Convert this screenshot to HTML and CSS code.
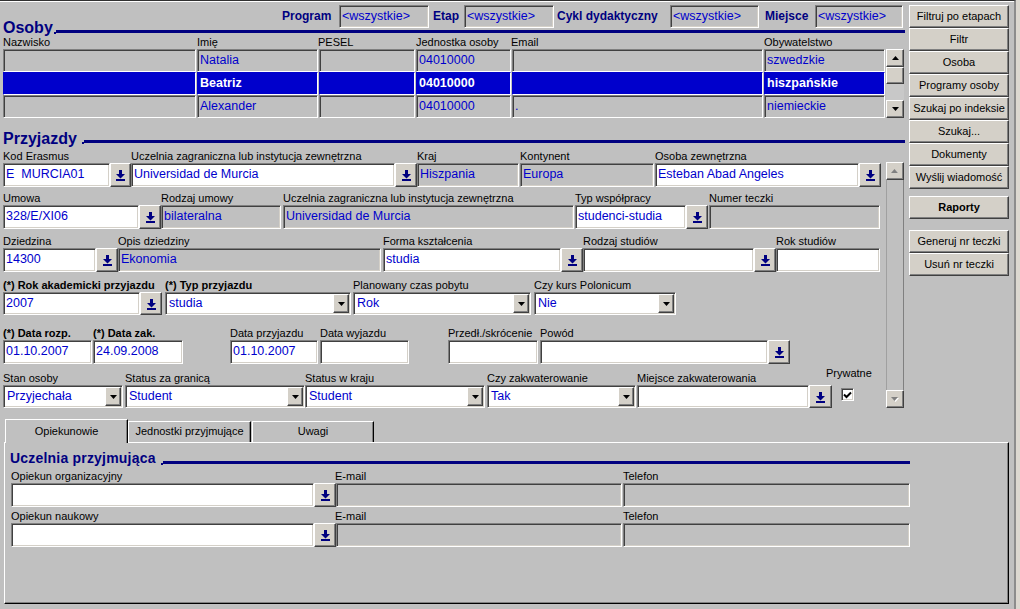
FILE: index.html
```html
<!DOCTYPE html>
<html lang="pl">
<head>
<meta charset="utf-8">
<title>Przyjazdy</title>
<link rel="stylesheet" href="styles.css">
</head>
<body>
<div class="app">
  <div class="top">
    <div class="leftcol">
      <div class="sechead hd-osoby">
        <div class="sectitle">Osoby</div>
        <div class="headright">
          <div class="filters">
            <span class="flbl fl-prog">Program</span><span class="ffld w90">&lt;wszystkie&gt;</span>
            <span class="flbl fl-etap">Etap</span><span class="ffld w90">&lt;wszystkie&gt;</span>
            <span class="flbl fl-cykl">Cykl dydaktyczny</span><span class="ffld w89">&lt;wszystkie&gt;</span>
            <span class="flbl fl-miej">Miejsce</span><span class="ffld w88">&lt;wszystkie&gt;</span>
          </div>
          <div class="hline"></div>
        </div>
      </div>

      <div class="cols thead">
        <span>Nazwisko</span><span>Imię</span><span class="lm1">PESEL</span><span>Jednostka osoby</span><span class="lm1">Email</span><span>Obywatelstwo</span>
      </div>
      <div class="tbl">
        <div class="cols rows">
          <div class="c"></div><div class="c">Natalia</div><div class="c"></div><div class="c">04010000</div><div class="c"></div><div class="c">szwedzkie</div>
          <div class="c sel"></div><div class="c sel">Beatriz</div><div class="c sel"></div><div class="c sel">04010000</div><div class="c sel"></div><div class="c sel">hiszpańskie</div>
          <div class="c"></div><div class="c">Alexander</div><div class="c"></div><div class="c">04010000</div><div class="c">.</div><div class="c">niemieckie</div>
        </div>
        <div class="vsb vsb-small">
          <div class="sbtn"><svg width="7" height="4" viewBox="0 0 7 4"><path d="M3.5 0L7 4H0z" fill="#000"/></svg></div>
          <div class="thumb"></div>
          <div class="track"></div>
          <div class="sbtn"><svg width="7" height="4" viewBox="0 0 7 4"><path d="M0 0h7L3.5 4z" fill="#000"/></svg></div>
        </div>
      </div>

      <div class="sechead hd-przy">
        <div class="sectitle">Przyjazdy</div>
        <div class="hline"></div>
      </div>

      <div class="przy-body">
        <div class="przy-fields">
          <div class="prow">
            <div class="fg g128"><div class="lbl">Kod Erasmus</div><div class="ctl"><div class="f w">E&nbsp;&nbsp;MURCIA01</div><div class="lk lk21"><svg width="9" height="11" viewBox="0 0 9 11"><path d="M3 0h3v4h3L4.5 8.5 0 4h3z" fill="#000080"/><rect x="0" y="9" width="9" height="2" fill="#000080"/></svg></div></div></div>
            <div class="fg g286"><div class="lbl">Uczelnia zagraniczna lub instytucja zewnętrzna</div><div class="ctl"><div class="f w">Universidad de Murcia</div><div class="lk"><svg width="9" height="11" viewBox="0 0 9 11"><path d="M3 0h3v4h3L4.5 8.5 0 4h3z" fill="#000080"/><rect x="0" y="9" width="9" height="2" fill="#000080"/></svg></div></div></div>
            <div class="fg g102"><div class="lbl">Kraj</div><div class="ctl"><div class="f">Hiszpania</div></div></div>
            <div class="fg g134 ml1"><div class="lbl">Kontynent</div><div class="ctl"><div class="f">Europa</div></div></div>
            <div class="fg g226 ml1"><div class="lbl">Osoba zewnętrzna</div><div class="ctl"><div class="f w">Esteban Abad Angeles</div><div class="lk"><svg width="9" height="11" viewBox="0 0 9 11"><path d="M3 0h3v4h3L4.5 8.5 0 4h3z" fill="#000080"/><rect x="0" y="9" width="9" height="2" fill="#000080"/></svg></div></div></div>
          </div>

          <div class="prow r2">
            <div class="fg g158"><div class="lbl">Umowa</div><div class="ctl"><div class="f w">328/E/XI06</div><div class="lk"><svg width="9" height="11" viewBox="0 0 9 11"><path d="M3 0h3v4h3L4.5 8.5 0 4h3z" fill="#000080"/><rect x="0" y="9" width="9" height="2" fill="#000080"/></svg></div></div></div>
            <div class="fg g120"><div class="lbl">Rodzaj umowy</div><div class="ctl"><div class="f">bilateralna</div></div></div>
            <div class="fg g291 ml2"><div class="lbl">Uczelnia zagraniczna lub instytucja zewnętrzna</div><div class="ctl"><div class="f">Universidad de Murcia</div></div></div>
            <div class="fg g133 ml1"><div class="lbl">Typ współpracy</div><div class="ctl"><div class="f w">studenci-studia</div><div class="lk"><svg width="9" height="11" viewBox="0 0 9 11"><path d="M3 0h3v4h3L4.5 8.5 0 4h3z" fill="#000080"/><rect x="0" y="9" width="9" height="2" fill="#000080"/></svg></div></div></div>
            <div class="fg g171 ml1"><div class="lbl">Numer teczki</div><div class="ctl"><div class="f"></div></div></div>
          </div>

          <div class="prow r3">
            <div class="fg g115"><div class="lbl">Dziedzina</div><div class="ctl"><div class="f w">14300</div><div class="lk"><svg width="9" height="11" viewBox="0 0 9 11"><path d="M3 0h3v4h3L4.5 8.5 0 4h3z" fill="#000080"/><rect x="0" y="9" width="9" height="2" fill="#000080"/></svg></div></div></div>
            <div class="fg g263"><div class="lbl">Opis dziedziny</div><div class="ctl"><div class="f">Ekonomia</div></div></div>
            <div class="fg g200 ml2"><div class="lbl">Forma kształcenia</div><div class="ctl"><div class="f w">studia</div><div class="lk"><svg width="9" height="11" viewBox="0 0 9 11"><path d="M3 0h3v4h3L4.5 8.5 0 4h3z" fill="#000080"/><rect x="0" y="9" width="9" height="2" fill="#000080"/></svg></div></div></div>
            <div class="fg g193"><div class="lbl">Rodzaj studiów</div><div class="ctl"><div class="f w"></div><div class="lk"><svg width="9" height="11" viewBox="0 0 9 11"><path d="M3 0h3v4h3L4.5 8.5 0 4h3z" fill="#000080"/><rect x="0" y="9" width="9" height="2" fill="#000080"/></svg></div></div></div>
            <div class="fg g104"><div class="lbl">Rok studiów</div><div class="ctl"><div class="f w"></div></div></div>
          </div>

          <div class="prow r4">
            <div class="fg g159"><div class="lbl b">(*) Rok akademicki przyjazdu</div><div class="ctl"><div class="f w h23">2007</div><div class="lk h23"><svg width="9" height="11" viewBox="0 0 9 11"><path d="M3 0h3v4h3L4.5 8.5 0 4h3z" fill="#000080"/><rect x="0" y="9" width="9" height="2" fill="#000080"/></svg></div></div></div>
            <div class="fg g186 ml3"><div class="lbl b">(*) Typ przyjazdu</div><div class="ctl"><div class="cb"><span class="t">studia</span><span class="dd"><svg width="7" height="4" viewBox="0 0 7 4"><path d="M0 0h7L3.5 4z" fill="#000"/></svg></span></div></div></div>
            <div class="fg g178 ml2"><div class="lbl">Planowany czas pobytu</div><div class="ctl"><div class="cb"><span class="t">Rok</span><span class="dd"><svg width="7" height="4" viewBox="0 0 7 4"><path d="M0 0h7L3.5 4z" fill="#000"/></svg></span></div></div></div>
            <div class="fg g142 ml3"><div class="lbl">Czy kurs Polonicum</div><div class="ctl"><div class="cb"><span class="t">Nie</span><span class="dd"><svg width="7" height="4" viewBox="0 0 7 4"><path d="M0 0h7L3.5 4z" fill="#000"/></svg></span></div></div></div>
          </div>

          <div class="prow r5">
            <div class="fg g89"><div class="lbl b">(*) Data rozp.</div><div class="ctl"><div class="f w">01.10.2007</div></div></div>
            <div class="fg g90 ml1"><div class="lbl b">(*) Data zak.</div><div class="ctl"><div class="f w">24.09.2008</div></div></div>
            <div class="fg g88 ml47"><div class="lbl">Data przyjazdu</div><div class="ctl"><div class="f w">01.10.2007</div></div></div>
            <div class="fg g89 ml2"><div class="lbl">Data wyjazdu</div><div class="ctl"><div class="f w"></div></div></div>
            <div class="fg g90 ml39"><div class="lbl">Przedł./skrócenie</div><div class="ctl"><div class="f w"></div></div></div>
            <div class="fg g250 ml2"><div class="lbl">Powód</div><div class="ctl"><div class="f w"></div><div class="lk"><svg width="9" height="11" viewBox="0 0 9 11"><path d="M3 0h3v4h3L4.5 8.5 0 4h3z" fill="#000080"/><rect x="0" y="9" width="9" height="2" fill="#000080"/></svg></div></div></div>
          </div>

          <div class="prow r6">
            <div class="fg g120"><div class="lbl">Stan osoby</div><div class="ctl"><div class="cb"><span class="t">Przyjechała</span><span class="dd"><svg width="7" height="4" viewBox="0 0 7 4"><path d="M0 0h7L3.5 4z" fill="#000"/></svg></span></div></div></div>
            <div class="fg g180 ml2"><div class="lbl">Status za granicą</div><div class="ctl"><div class="cb"><span class="t">Student</span><span class="dd"><svg width="7" height="4" viewBox="0 0 7 4"><path d="M0 0h7L3.5 4z" fill="#000"/></svg></span></div></div></div>
            <div class="fg g180"><div class="lbl">Status w kraju</div><div class="ctl"><div class="cb"><span class="t">Student</span><span class="dd"><svg width="7" height="4" viewBox="0 0 7 4"><path d="M0 0h7L3.5 4z" fill="#000"/></svg></span></div></div></div>
            <div class="fg g149 ml2"><div class="lbl">Czy zakwaterowanie</div><div class="ctl"><div class="cb"><span class="t">Tak</span><span class="dd"><svg width="7" height="4" viewBox="0 0 7 4"><path d="M0 0h7L3.5 4z" fill="#000"/></svg></span></div></div></div>
            <div class="fg g195 ml1"><div class="lbl">Miejsce zakwaterowania</div><div class="ctl"><div class="f w h23"></div><div class="lk lk23 h23"><svg width="9" height="11" viewBox="0 0 9 11"><path d="M3 0h3v4h3L4.5 8.5 0 4h3z" fill="#000080"/><rect x="0" y="9" width="9" height="2" fill="#000080"/></svg></div></div></div>
            <div class="fg prywatne"><div class="lbl">Prywatne</div><div class="chk"><svg width="9" height="8" viewBox="0 0 9 8"><path d="M1 3.5l2.5 2.5L8 1.5" fill="none" stroke="#000" stroke-width="2"/></svg></div></div>
          </div>
        </div>
        <div class="vsb vsb-big">
          <div class="sbtn dis"><svg width="8" height="5" viewBox="0 0 8 5"><path d="M4 1L7 4H1z" fill="#fff"/><path d="M3.5 0L7 4H0z" fill="#808080"/></svg></div>
          <div class="track"></div>
          <div class="sbtn dis"><svg width="8" height="5" viewBox="0 0 8 5"><path d="M1 1h7L4.5 5z" fill="#fff"/><path d="M0 0h7L3.5 4z" fill="#808080"/></svg></div>
        </div>
      </div>
    </div>

    <div class="btncol">
      <div class="btn">Filtruj po etapach</div>
      <div class="btn">Filtr</div>
      <div class="btn">Osoba</div>
      <div class="btn">Programy osoby</div>
      <div class="btn">Szukaj po indeksie</div>
      <div class="btn">Szukaj...</div>
      <div class="btn">Dokumenty</div>
      <div class="btn">Wyślij wiadomość</div>
      <div class="btn bold gap7">Raporty</div>
      <div class="btn gap11">Generuj nr teczki</div>
      <div class="btn">Usuń nr teczki</div>
    </div>
  </div>

  <div class="tabs">
    <div class="tab active t123">Opiekunowie</div>
    <div class="tab t123">Jednostki przyjmujące</div>
    <div class="tab t122 ml1">Uwagi</div>
  </div>
  <div class="panel">
    <div class="sechead hd-pnl">
      <div class="sectitle small">Uczelnia przyjmująca</div>
      <div class="hline"></div>
    </div>
    <div class="prow pr1">
      <div class="fg g325"><div class="lbl">Opiekun organizacyjny</div><div class="ctl"><div class="f w"></div><div class="lk"><svg width="9" height="11" viewBox="0 0 9 11"><path d="M3 0h3v4h3L4.5 8.5 0 4h3z" fill="#000080"/><rect x="0" y="9" width="9" height="2" fill="#000080"/></svg></div></div></div>
      <div class="fg g286"><div class="lbl lm1">E-mail</div><div class="ctl"><div class="f"></div></div></div>
      <div class="fg g287 ml1"><div class="lbl">Telefon</div><div class="ctl"><div class="f"></div></div></div>
    </div>
    <div class="prow pr2">
      <div class="fg g325"><div class="lbl">Opiekun naukowy</div><div class="ctl"><div class="f w"></div><div class="lk"><svg width="9" height="11" viewBox="0 0 9 11"><path d="M3 0h3v4h3L4.5 8.5 0 4h3z" fill="#000080"/><rect x="0" y="9" width="9" height="2" fill="#000080"/></svg></div></div></div>
      <div class="fg g286"><div class="lbl lm1">E-mail</div><div class="ctl"><div class="f"></div></div></div>
      <div class="fg g287 ml1"><div class="lbl">Telefon</div><div class="ctl"><div class="f"></div></div></div>
    </div>
  </div>
</div>
</body>
</html>
```

FILE: styles.css
```css
* { box-sizing: border-box; margin: 0; padding: 0; }
html, body { width: 1020px; height: 609px; overflow: hidden; }
body {
  background: #dcd8d0;
  font-family: "Liberation Sans", Arial, sans-serif;
  font-size: 11px;
  color: #000;
}
.app {
  width: 1016px;
  height: 609px;
  background: #c0c0c0;
  border-top: 1px solid #303030;
  border-right: 2px solid #8c8c8c;
  box-shadow: inset 0 1px 0 #ffffff;
}
.top { display: flex; height: 418px; }
.leftcol { width: 905px; }

/* section headers */
.sechead { display: flex; align-items: flex-end; }
.sectitle {
  font-weight: bold;
  font-size: 16px;
  line-height: 16px;
  color: #000080;
  padding-left: 3px;
  white-space: nowrap;
}
.sectitle.small { font-size: 14px; line-height: 14px; padding-left: 0; letter-spacing: 0.2px; }
.hline {
  position: relative;
  flex: 1;
  height: 3px;
  background: #000080;
  margin-left: 5px;
}
.hline::before {
  content: "";
  position: absolute;
  left: -2px;
  top: 2px;
  width: 2px;
  height: 2px;
  background: #000080;
}
.hd-osoby { height: 35px; }
.headright { flex: 1; display: flex; flex-direction: column; margin-left: 3px; }
.headright .hline { flex: none; margin-left: 0; margin-top: 2px; margin-bottom: 3px; }
.filters {
  display: flex;
  justify-content: flex-end;
  margin-top: 4px;
  height: 23px;
  padding-right: 2px;
}
.flbl {
  font-weight: bold;
  font-size: 12px;
  line-height: 23px;
  color: #000080;
  white-space: nowrap;
}
.fl-prog { width: 58px; padding-left: 1px; }
.fl-etap { width: 35px; padding-left: 4px; }
.fl-cykl { width: 116px; padding-left: 3px; }
.fl-miej { width: 56px; padding-left: 6px; }
.ffld {
  height: 23px;
  border: 1px solid;
  border-color: #808080 #fff #fff #808080;
  box-shadow: inset 1px 1px 0 #404040, inset -1px -1px 0 #d4d0c8;
  color: #0000cc;
  font-size: 12.5px;
  line-height: 20px;
  padding-left: 2px;
  white-space: nowrap;
  overflow: hidden;
}
.w90 { width: 90px; }
.w89 { width: 89px; }
.w88 { width: 88px; }

/* Osoby table */
.cols {
  display: grid;
  grid-template-columns: 193px 121px 96px 95px 251px 121px;
  column-gap: 1px;
}
.thead { margin-left: 3px; height: 13px; line-height: 13px; white-space: nowrap; }
.lm1 { margin-left: -1px; }
.tbl { display: flex; margin-left: 3px; height: 69px; }
.rows { grid-auto-rows: 23px; }
.c {
  height: 23px;
  border: 1px solid;
  border-color: #808080 #fff #fff #808080;
  box-shadow: inset 1px 1px 0 #404040;
  color: #0000cc;
  font-size: 12.5px;
  line-height: 20px;
  padding-left: 2px;
  white-space: nowrap;
  overflow: hidden;
}
.c.sel {
  background: #0000cc;
  color: #fff;
  font-weight: bold;
  border-color: #0000cc #fff #fff #0000cc;
  box-shadow: none;
}

/* scrollbars */
.vsb { width: 18px; display: flex; flex-direction: column; }
.vsb-small { margin-left: 1px; }
.vsb-small .thumb {
  height: 17px;
  background: #d4d0c8;
  border: 1px solid;
  border-color: #fff #404040 #404040 #fff;
  box-shadow: inset -1px -1px 0 #808080;
}
.vsb-small .track { height: 16px; background: #c8c8c8; }
.sbtn {
  height: 18px;
  background: #d4d0c8;
  border: 1px solid;
  border-color: #fff #404040 #404040 #fff;
  box-shadow: inset -1px -1px 0 #808080;
  display: flex;
  align-items: center;
  justify-content: center;
}
.vsb-big { margin-left: 3px; margin-top: 12px; height: 246px; }
.vsb-big .track {
  flex: 1;
  background: #c0c0c0;
  border-left: 1px solid #a0a0a0;
  border-right: 1px solid #808080;
}

/* Przyjazdy */
.hd-przy { margin-top: 13px; height: 16px; }
.hd-przy .hline { margin-bottom: 4px; margin-left: 7px; }
.przy-body { display: flex; margin-top: 3px; }
.przy-fields { width: 883px; }
.prow { display: flex; align-items: flex-start; padding-left: 3px; }
.r2 { margin-top: 5px; }
.r3 { margin-top: 6px; }
.r4 { margin-top: 7px; }
.r5 { margin-top: 12px; }
.r6 { margin-top: 8px; }
.fg { display: flex; flex-direction: column; }
.lbl { height: 13px; line-height: 13px; white-space: nowrap; }
.lbl.b { font-weight: bold; }
.ctl { display: flex; }
.f {
  flex: 1;
  min-width: 0;
  height: 24px;
  border: 1px solid;
  border-color: #808080 #fff #fff #808080;
  box-shadow: inset 1px 1px 0 #404040, inset -1px -1px 0 #d4d0c8;
  background: #c0c0c0;
  color: #0000cc;
  font-size: 12.5px;
  line-height: 21px;
  padding-left: 2px;
  white-space: nowrap;
  overflow: hidden;
}
.f.w { background: #fff; }
.f.h23 { height: 23px; line-height: 20px; }
.lk {
  width: 22px;
  height: 24px;
  flex: none;
  background: #d4d0c8;
  border: 1px solid;
  border-color: #fff #404040 #404040 #fff;
  box-shadow: inset -1px -1px 0 #808080;
  display: flex;
  align-items: center;
  justify-content: center;
  padding-top: 1px;
}
.lk21 { width: 21px; }
.lk23 { width: 23px; }
.lk.h23 { height: 23px; }
.cb {
  flex: 1;
  display: flex;
  height: 23px;
  padding: 1px;
  background: #fff;
  border: 1px solid;
  border-color: #808080 #fff #fff #808080;
  box-shadow: inset 1px 1px 0 #404040, inset -1px -1px 0 #d4d0c8;
}
.cb .t {
  flex: 1;
  color: #0000cc;
  font-size: 12.5px;
  line-height: 19px;
  padding-left: 2px;
  white-space: nowrap;
  overflow: hidden;
}
.cb .dd {
  width: 16px;
  background: #d4d0c8;
  border: 1px solid;
  border-color: #fff #404040 #404040 #fff;
  box-shadow: inset -1px -1px 0 #808080;
  display: flex;
  align-items: center;
  justify-content: center;
  padding-top: 1px;
}
.prywatne { margin-left: -6px; margin-top: -5px; }
.chk {
  width: 13px;
  height: 13px;
  margin-left: 15px;
  margin-top: 8px;
  background: #fff;
  border: 1px solid;
  border-color: #808080 #fff #fff #808080;
  box-shadow: inset 1px 1px 0 #404040, inset -1px -1px 0 #d4d0c8;
  display: flex;
  align-items: center;
  justify-content: center;
}

.g128 { width: 128px; } .g286 { width: 286px; } .g102 { width: 102px; }
.g134 { width: 134px; } .g226 { width: 226px; } .g158 { width: 158px; }
.g120 { width: 120px; } .g291 { width: 291px; } .g133 { width: 133px; }
.g171 { width: 171px; } .g115 { width: 115px; } .g263 { width: 263px; }
.g200 { width: 200px; } .g193 { width: 193px; } .g104 { width: 104px; }
.g159 { width: 159px; } .g186 { width: 186px; } .g178 { width: 178px; }
.g142 { width: 142px; } .g89 { width: 89px; } .g90 { width: 90px; }
.g88 { width: 88px; } .g250 { width: 250px; } .g180 { width: 180px; }
.g149 { width: 149px; } .g195 { width: 195px; } .g325 { width: 325px; }
.g287 { width: 287px; }
.ml1 { margin-left: 1px; } .ml2 { margin-left: 2px; } .ml3 { margin-left: 3px; }
.ml39 { margin-left: 39px; } .ml47 { margin-left: 47px; }

/* right buttons */
.btncol { width: 100px; margin-left: 4px; margin-top: 4px; display: flex; flex-direction: column; }
.btn {
  height: 23px;
  background: #d4d0c8;
  border: 1px solid;
  border-color: #fff #404040 #404040 #fff;
  box-shadow: inset -1px -1px 0 #808080;
  text-align: center;
  line-height: 20px;
  white-space: nowrap;
}
.btn.bold { font-weight: bold; }
.gap7 { margin-top: 7px; }
.gap11 { margin-top: 11px; }

/* tabs */
.tabs { display: flex; align-items: flex-end; margin-left: 5px; height: 23px; }
.tab {
  height: 21px;
  background: #c0c0c0;
  border-top: 1px solid #fff;
  border-left: 1px solid #fff;
  border-right: 1px solid #000;
  box-shadow: inset -1px 0 0 #808080;
  text-align: center;
  line-height: 19px;
  white-space: nowrap;
}
.tab.active {
  position: relative;
  z-index: 1;
  height: 24px;
  margin-bottom: -1px;
  line-height: 22px;
}
.t123 { width: 123px; }
.t122 { width: 122px; }
.panel {
  margin-left: 4px;
  width: 1005px;
  height: 162px;
  border: 1px solid;
  border-color: #fff #000 #000 #fff;
  box-shadow: inset -1px -1px 0 #808080;
  padding-left: 6px;
}
.hd-pnl { margin-top: 8px; height: 14px; width: 900px; margin-left: -1px; }
.hd-pnl .hline { margin-bottom: 1px; margin-left: 7px; }
.pr1 { margin-top: 5px; padding-left: 0; }
.pr2 { margin-top: 3px; padding-left: 0; }
```
